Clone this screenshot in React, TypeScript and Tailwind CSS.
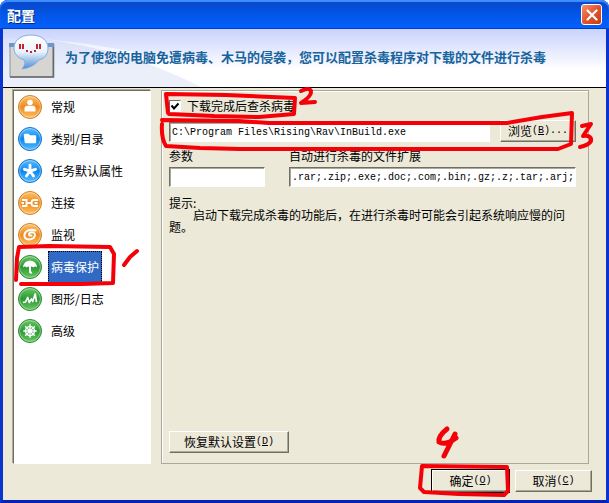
import type { ReactNode } from "react";
import clsx from "clsx";

type Tone = "orange" | "blue" | "green";

const tones: Record<Tone, { rim: string; light: string; dark: string }> = {
  orange: { rim: "#c9822c", light: "#ffc36b", dark: "#ee8a1c" },
  blue: { rim: "#1670c8", light: "#5cc0ff", dark: "#0a86f0" },
  green: { rim: "#2f8a35", light: "#6cc865", dark: "#2b9a34" },
};

const sections: { key: string; label: string; tone: Tone; glyph: ReactNode }[] = [
  {
    key: "general",
    label: "常规",
    tone: "orange",
    glyph: (
      <g fill="#fff">
        <circle cx="12" cy="7.500" r="2.800" />
        <path d="M6.500 16.500v-3q0-2.800 3-2.800h5q3 0 3 2.800v3z" />
      </g>
    ),
  },
  {
    key: "category",
    label: "类别/目录",
    tone: "blue",
    glyph: <path d="M5.800 8q0-1.200 1-1.200h3.700l1.500 1.500h5q1.200 0 1.200 1.200V15q0 1.200-1.200 1.200H8q-1.200 0-1.400-1.200z" fill="#fff" />,
  },
  {
    key: "defaults",
    label: "任务默认属性",
    tone: "blue",
    glyph: (
      <path
        d="M12 12V6.200M12 12L6.500 10.300M12 12l5.500-1.700M12 12l-3.500 5M12 12l3.500 5"
        stroke="#fff"
        strokeWidth="2.900"
        strokeLinecap="round"
      />
    ),
  },
  {
    key: "connection",
    label: "连接",
    tone: "orange",
    glyph: (
      <path
        d="M4 9h4.500v6H4M8.500 12h5M20 9h-4q-2.500 0-2.500 3t2.500 3h4M3.500 12h2.500M16.500 12h3"
        stroke="#fff"
        strokeWidth="1.800"
        fill="none"
      />
    ),
  },
  {
    key: "monitor",
    label: "监视",
    tone: "orange",
    glyph: (
      <path
        d="M17.500 7.500Q12 5.500 8.200 8.500 5 12 7.500 15.300q4 2.700 8-.3 3-3.500 0-5.500-3.500-1-4.500 1.300-.3 2.200 2.500 1.700"
        stroke="#fff"
        strokeWidth="2"
        strokeLinecap="round"
        fill="none"
      />
    ),
  },
  {
    key: "antivirus",
    label: "病毒保护",
    tone: "green",
    glyph: (
      <>
        <path d="M5 12.500Q5.500 6.200 12 5.500q6.500.7 7 7-2-2-3.800 0-1.500-1.600-3.200-.5-1.700-1.100-3.200.5-1.800-2-3.800 0z" fill="#fff" />
        <path d="M12 11v5.500q0 1.500 2 1" stroke="#fff" strokeWidth="2" fill="none" />
      </>
    ),
  },
  {
    key: "graph",
    label: "图形/日志",
    tone: "green",
    glyph: (
      <path
        d="M5 15.500l2.500-.5 2.200-4.500 1.600 5 2.200-3.500 1.200 2.500L17.200 7l1.300 8"
        stroke="#fff"
        strokeWidth="1.700"
        strokeLinejoin="round"
        fill="none"
      />
    ),
  },
  {
    key: "advanced",
    label: "高级",
    tone: "green",
    glyph: (
      <g stroke="#fff" strokeWidth="1.400" fill="none">
        <circle cx="12" cy="12" r="4.500" />
        <circle cx="12" cy="12" r="1" />
        <path d="M12 5.200v13.600M5.200 12h13.600M7.200 7.200l9.600 9.600M16.800 7.200l-9.600 9.600" />
      </g>
    ),
  },
];

function SectionIcon({ id, tone, children }: { id: string; tone: Tone; children: ReactNode }) {
  const c = tones[tone];
  return (
    <svg viewBox="0 0 24 24" className="size-6 shrink-0" aria-hidden="true">
      <defs>
        <linearGradient id={`orb-${id}`} x1="0" y1="0" x2="0" y2="1">
          <stop offset="0" stopColor={c.light} />
          <stop offset="0.5" stopColor={c.dark} />
          <stop offset="1" stopColor={c.light} />
        </linearGradient>
      </defs>
      <circle cx="12" cy="12" r="11.500" fill={`url(#orb-${id})`} stroke={c.rim} />
      <circle cx="12" cy="12" r="10.400" fill="none" stroke="#fff" strokeOpacity="0.4" />
      {children}
    </svg>
  );
}

function DialogButton({
  hotkey,
  suffix = "",
  isDefault = false,
  className,
  children,
}: {
  hotkey: string;
  suffix?: string;
  isDefault?: boolean;
  className?: string;
  children: ReactNode;
}) {
  return (
    <button
      type="button"
      className={clsx(
        "flex h-[22px] shrink-0 items-center justify-center border border-t-white border-l-white border-r-[#716f64] border-b-[#716f64] bg-[#ece9d8] leading-3 whitespace-nowrap shadow-[inset_-1px_-1px_0_#aca899]",
        isDefault && "outline outline-black",
        className
      )}
    >
      {children}
      <span className="font-['Liberation_Mono',monospace] text-[10px]">
        (<span className="underline">{hotkey}</span>){suffix}
      </span>
    </button>
  );
}

const fieldClass =
  "h-5 w-full min-w-0 border border-t-[#716f64] border-l-[#716f64] border-r-white border-b-white bg-white px-0.5 font-['Liberation_Mono',monospace] text-[10px] text-black shadow-[inset_1px_1px_0_#aca899] outline-none";

function MascotIcon() {
  return (
    <svg viewBox="0 0 48 46" className="h-[46px] w-12 shrink-0" aria-hidden="true">
      <defs>
        <linearGradient id="bubble" x1="0" y1="0" x2="0" y2="1">
          <stop offset="0" stopColor="#fff" />
          <stop offset="0.5" stopColor="#eaf3fc" />
          <stop offset="1" stopColor="#4d8cd2" />
        </linearGradient>
      </defs>
      <path d="M1 10h43v33H1z" fill="#d6d5d1" stroke="#8d939c" />
      <path d="M1 43h43.500V10" fill="none" stroke="#66686c" strokeWidth="1.500" />
      <path d="M0 9h6v4H0zM39 9h6v4h-6z" fill="#6d96cf" />
      <path
        d="M22 1C11 1 5 7 5 14c0 6 4 10 10 12 2 3 0 6-2 9 8-1 13-4 17-9 6-1.500 9-6 9-12C39 7 33 1 22 1z"
        fill="url(#bubble)"
        stroke="#82aee0"
      />
      <path d="M11 10v5M14 10v5M28 10v5M31 10v5" stroke="#c3262e" strokeWidth="2" />
      <path d="M17 17h2M21 18h2M25 17h2" stroke="#c3262e" strokeWidth="2" />
    </svg>
  );
}

function Sidebar() {
  return (
    <nav className="w-[138px] shrink-0 border border-t-[#716f64] border-l-[#716f64] border-r-white border-b-white bg-white shadow-[-1px_-1px_0_#aca899]">
      <ul>
        {sections.map((section) => {
          const active = section.key === "antivirus";
          return (
            <li key={section.key}>
              <a href={`#${section.key}`} className="flex h-8 items-center gap-1.5 pl-1">
                <SectionIcon id={section.key} tone={section.tone}>
                  {section.glyph}
                </SectionIcon>
                <span
                  className={clsx(
                    "flex h-8 items-center border px-0.5",
                    active ? "border-dotted border-black bg-[#316ac5] text-white" : "border-transparent"
                  )}
                >
                  {section.label}
                </span>
              </a>
            </li>
          );
        })}
      </ul>
    </nav>
  );
}

// Red pen strokes and step numbers drawn over the dialog
function PenMarks() {
  return (
    <svg
      viewBox="0 0 609 503"
      className="size-full"
      fill="none"
      stroke="#f50008"
      strokeWidth="4"
      strokeLinecap="round"
      strokeLinejoin="round"
      aria-hidden="true"
    >
      <path d="M16 280l1-22 2-11 30-1 61 1 4 7-1 29-31 1H21" />
      <path d="M124 265l6-8 7-6" />
      <path d="M168 113l-2-19 60 1 69 3-1 16-35 3-45-1-45-2" />
      <path d="M301 91q8-4 10 0 1 5-10 12l14-1" />
      <path d="M162 120l77 1 30 2h238l35-6 30-4-1 31-13 5H240l-40-1-34-2q-5-8-4-22" />
      <path d="M582 126l9-2-8 12q9-1 8 5-2 4-11 6" />
      <path d="M447 429q-9 7-8 13 6 4 17-4M455 434l-11 22" strokeWidth="5" />
      <path d="M506 467l-84-1-2 22 4 4 35 2 45 1 4-4-1-24z" />
    </svg>
  );
}

export default function App() {
  return (
    <div className="relative flex min-h-screen flex-col rounded-t-lg border-x-3 border-b-3 border-[#0a34cf] border-b-[#0423b4] bg-[#ece9d8] font-['Noto_Sans_CJK_SC',sans-serif] text-xs leading-3 text-black">
      <header className="-mx-[3px] flex h-[29px] items-center justify-between rounded-t-lg bg-linear-to-b from-[#0a45c4] via-[#0256e8] to-[#0361fc] px-[7px] shadow-[inset_0_2px_1px_#3b91ff,inset_0_-1px_0_#003dc4]">
        <h1 className="text-sm leading-4 font-bold text-white [text-shadow:1px_1px_0_#0a2a80]">配置</h1>
        <button
          type="button"
          aria-label="关闭"
          className="flex size-[21px] items-center justify-center rounded-[3px] border border-white bg-linear-to-br from-[#f0906e] via-[#e2542c] to-[#c93b12]"
        >
          <svg viewBox="0 0 12 12" className="size-3" stroke="#fff" strokeWidth="2.200" strokeLinecap="round" aria-hidden="true">
            <path d="M1.500 1.500l9 9M10.500 1.500l-9 9" />
          </svg>
        </button>
      </header>

      <div className="relative h-[59px] border-b border-black bg-linear-to-b from-[#c9d2fb] to-white to-70%">
        <svg viewBox="0 0 300 58" className="absolute inset-y-0 left-0 h-full" aria-hidden="true">
          <path d="M40 10Q130 18 290 58H200Q120 20 40 10z" fill="#fff" fillOpacity="0.6" />
          <path d="M0 10Q100 8 198 58H0z" fill="#dce4f6" fillOpacity="0.6" />
        </svg>
        <div className="relative flex h-full items-center gap-2 pb-0.5 pl-1.5">
          <MascotIcon />
          <p className="text-[13px] leading-4 font-bold whitespace-nowrap text-[#17639c]">
            为了使您的电脑免遭病毒、木马的侵袭，您可以配置杀毒程序对下载的文件进行杀毒
          </p>
        </div>
      </div>

      <main className="flex flex-1 gap-2.5 pt-0.5 pr-[17px] pl-2.5">
        <Sidebar />

        <form className="flex min-w-0 flex-1 flex-col border border-[#aca899] pt-[7px] pr-3 pb-2.5 pl-[7px] shadow-[inset_1px_1px_0_#fff]">
          <label className="flex h-4 items-center gap-1.5">
            <span className="relative flex size-3">
              <input
                type="checkbox"
                defaultChecked
                className="peer size-3 appearance-none border border-t-[#716f64] border-l-[#716f64] border-r-white border-b-white bg-white"
              />
              <svg
                viewBox="0 0 12 12"
                className="pointer-events-none absolute inset-0 hidden size-3 peer-checked:block"
                fill="none"
                stroke="#000"
                strokeWidth="2"
                aria-hidden="true"
              >
                <path d="M2.500 5.500l2.500 3 4.500-5" />
              </svg>
            </span>
            下载完成后查杀病毒
          </label>

          <div className="mt-1.5 flex items-end gap-2.5">
            <input aria-label="杀毒程序" defaultValue="C:\Program Files\Rising\Rav\InBuild.exe" className={fieldClass} />
            <DialogButton hotkey="B" suffix="..." className="w-[76px]">
              浏览
            </DialogButton>
          </div>

          <div className="mt-2 flex gap-6">
            <label className="flex w-24 flex-col gap-[5px]">
              参数
              <input className={fieldClass} />
            </label>
            <label className="flex min-w-0 flex-1 flex-col gap-[5px]">
              自动进行杀毒的文件扩展
              <input defaultValue=".rar;.zip;.exe;.doc;.com;.bin;.gz;.z;.tar;.arj;" className={fieldClass} />
            </label>
          </div>

          <p className="mt-2.5 whitespace-pre-line">
            {"提示:\n　　启动下载完成杀毒的功能后，在进行杀毒时可能会引起系统响应慢的问题。"}
          </p>

          <DialogButton hotkey="D" className="mt-auto w-[120px]">
            恢复默认设置
          </DialogButton>
        </form>
      </main>

      <footer className="flex justify-end gap-1.5 pt-1.5 pr-3.5 pb-2">
        <DialogButton hotkey="O" isDefault className="w-[77px]">
          确定
        </DialogButton>
        <DialogButton hotkey="C" className="w-[77px]">
          取消
        </DialogButton>
      </footer>

      <div className="pointer-events-none absolute -inset-x-[3px] top-0 -bottom-[3px]">
        <PenMarks />
      </div>
    </div>
  );
}
